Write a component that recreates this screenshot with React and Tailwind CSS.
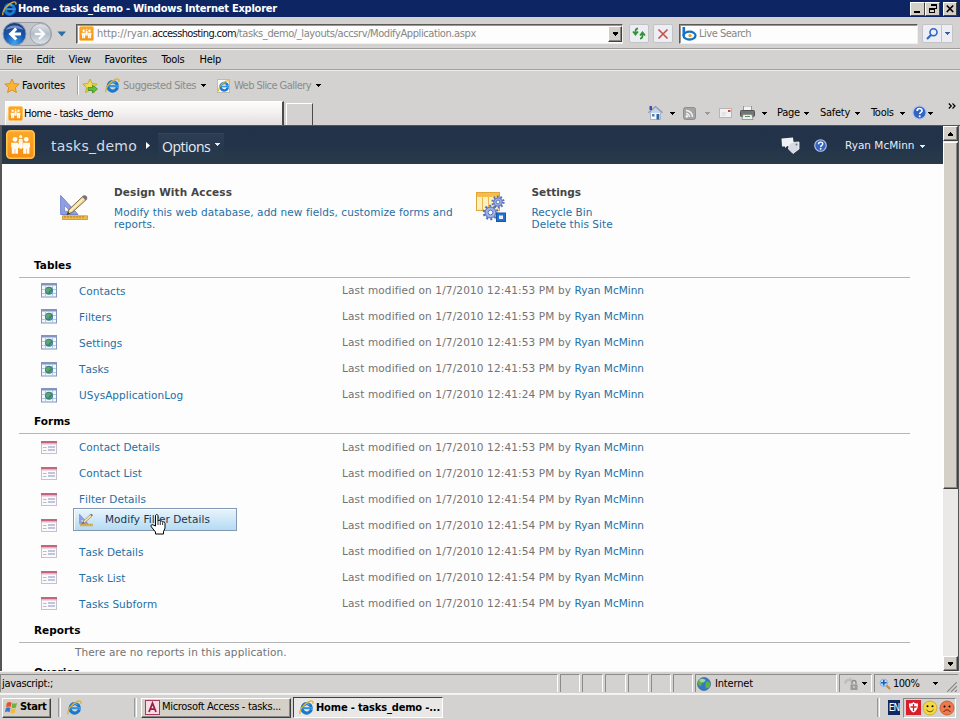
const SYS = "[font-family:'DejaVu_Sans_Condensed','DejaVu_Sans',sans-serif] text-[11px]";
const WEB = "[font-family:'DejaVu_Sans',sans-serif] text-[10.5px]";

const tables = [
  ["Contacts", "12:41:53"],
  ["Filters", "12:41:53"],
  ["Settings", "12:41:53"],
  ["Tasks", "12:41:53"],
  ["USysApplicationLog", "12:41:24"],
];

const forms = [
  ["Contact Details", "12:41:53"],
  ["Contact List", "12:41:53"],
  ["Filter Details", "12:41:54"],
  ["Settings", "12:41:54"],
  ["Task Details", "12:41:54"],
  ["Task List", "12:41:54"],
  ["Tasks Subform", "12:41:54"],
];

function Caret({ className = "" }) {
  return (
    <svg viewBox="0 0 5 3" className={"h-[3px] w-[5px] shrink-0 " + className} shapeRendering="crispEdges">
      <path d="M0 0h5L2.5 3z" fill="currentColor" />
    </svg>
  );
}

function IeLogo({ className }) {
  return (
    <svg viewBox="0 0 16 16" className={"shrink-0 " + className}>
      <path d="M13.2 9.800A5 5 0 1 1 13.1 7.600" fill="none" stroke="#1c78cc" strokeWidth="3.400" />
      <path d="M4 8.700h10.800" stroke="#2f93de" strokeWidth="2.200" />
      <path d="M4.400 6.400A4.600 4.600 0 0 1 11 4.700" fill="none" stroke="#7cc8f4" strokeWidth="1" />
      <path d="M1.200 15.200C-.6 12 4.600 4 11 1.400c3.200-1.200 4.600 0 3.600 2.600" fill="none" stroke="#e2b024" strokeWidth="1.400" />
    </svg>
  );
}

function SiteLogo({ className }) {
  return (
    <svg viewBox="0 0 28 28" className={"shrink-0 " + className}>
      <defs>
        <linearGradient id="site" x1="0" y1="0" x2="0" y2="1">
          <stop offset="0" stopColor="#fba92a" />
          <stop offset="1" stopColor="#f68f14" />
        </linearGradient>
      </defs>
      <rect x=".75" y=".75" width="26.5" height="26.5" rx="3.500" fill="url(#site)" stroke="#ffc653" strokeWidth="1.500" />
      <g fill="#fffaf0">
        <circle cx="8.700" cy="9" r="2.300" />
        <circle cx="19.600" cy="9" r="2.300" />
        <circle cx="14.200" cy="6.400" r="1.500" />
        <path d="M5 12.400h6.200l1.500 1.800v3.200h-1.100V23H8.900v-4.600h-.5V23H5.600v-6H5zM17 12.400h6.200V17h-.6v6h-2.700v-4.600h-.5V23h-2.800v-5.600h-1v-3.200z" />
        <path d="M12.600 8.800h3.200l.4 2.800-.8 6.400h-2.400l-.8-6.400z" />
      </g>
    </svg>
  );
}

function Star({ className, arrow }) {
  return (
    <svg viewBox="0 0 16 16" className={"shrink-0 " + className}>
      <path d="M8 1l2.100 4.600 5 .5-3.800 3.400 1.100 5L8 12l-4.400 2.500 1.100-5L.9 6.100l5-.5z" fill={arrow ? "#f6dc4c" : "#fbb433"} stroke={arrow ? "#b9a832" : "#d98a1f"} strokeWidth=".9" />
      {arrow && <path d="M6 9.500h4.500V7l5 4-5 4v-2.600H6z" fill="#5fc044" stroke="#2f8a22" strokeWidth=".7" />}
    </svg>
  );
}

function DesignIcon({ className }) {
  return (
    <svg viewBox="0 0 28 27" className={"shrink-0 " + className}>
      <path d="M.7 1.500L18 20.500H.7z" fill="#8f9fe0" stroke="#7183cf" />
      <path d="M4.600 11.400l5.400 5.800H4.600z" fill="#fff" stroke="#6a7ccc" strokeWidth=".7" />
      <path d="M2.500 21.800h25v3.700h-25z" fill="#eebb4a" stroke="#c98f27" strokeWidth=".8" />
      <path d="M5 22v1.800M8 22v1.800M11 22v1.800M14 22v1.800M17 22v1.800M20 22v1.800M23 22v1.800" stroke="#8f6414" strokeWidth=".7" />
      <path d="M7 20.500l2-5L23.500 1.800l3.300 3.300L12 18.500z" fill="#f0d79a" stroke="#705c38" strokeWidth=".9" />
      <path d="M10 17.300L24.400 3.700" stroke="#fff3cc" strokeWidth="1.200" />
      <path d="M22.300 3l1.600-1.500c1.500-1 4.200 1.500 3.200 3.100l-1.600 1.600z" fill="#7d7371" />
      <path d="M6.700 21l1.400-3.300 2 2z" fill="#4a3d2c" />
    </svg>
  );
}

function Gear({ cx, cy, r }) {
  const c = 2 * Math.PI * r;
  return (
    <g>
      <circle cx={cx} cy={cy} r={r} fill="none" stroke="#5a74ba" strokeWidth="3.200" strokeDasharray={`${c / 20} ${c / 20}`} />
      <circle cx={cx} cy={cy} r={r - 0.8} fill="#a0b3e4" stroke="#6880c4" strokeWidth="1.200" />
      <circle cx={cx} cy={cy} r={r / 2.6} fill="#f2f5ff" stroke="#5a74ba" strokeWidth="1" />
    </g>
  );
}

function SettingsIcon() {
  return (
    <svg viewBox="0 0 30 31" className="h-[31px] w-[30px] shrink-0">
      <rect x=".5" y="1.500" width="23" height="18" fill="#fff0bd" stroke="#e0a63a" />
      <rect x="1" y="2" width="22" height="4" fill="#f7bd4a" />
      <path d="M6.500 6v13M12.500 6v13M18.500 6v13" stroke="#eab64f" strokeWidth="1" />
      <Gear cx={22} cy={11} r={5} />
      <Gear cx={14.5} cy={21.5} r={6.2} />
      <rect x="20.500" y="22" width="9" height="8.500" fill="#2470cf" stroke="#1558ab" />
      <rect x="23" y="24.500" width="4" height="3.500" fill="#e9f2ff" />
    </svg>
  );
}

function TableIcon() {
  return (
    <svg viewBox="0 0 16 15" className="h-[15px] w-4 shrink-0">
      <rect x=".5" y=".5" width="15" height="13.500" fill="#f2f7fd" stroke="#8196b8" />
      <path d="M0 0h16v2.500H0z" fill="#8296bd" />
      <path d="M1 6.500h14M1 10.500h14M4.500 3v11M11.500 3v11" stroke="#b3c7e0" />
      <circle cx="8" cy="7.800" r="4" fill="#3a7f90" />
      <path d="M5.500 5.500c2-1.500 4-.8 4.500.5s-2 1.200-2 2.500-1.500 1.600-2.500.5-.8-2.500 0-3.500z" fill="#5fa862" />
      <path d="M10 8l1.500.3-1 2-1.500.5z" fill="#55a85b" />
    </svg>
  );
}

function FormIcon() {
  return (
    <svg viewBox="0 0 16 13" className="h-[13px] w-4 shrink-0">
      <rect x=".5" y=".5" width="15" height="12" fill="#fbf9fc" stroke="#c9c0cf" />
      <path d="M0 0h16v2.500H0z" fill="#c0667e" />
      <path d="M0 3h16" stroke="#e3b9c4" strokeWidth="1" />
      <path d="M2 6.500h3.500M2 9.500h3.500" stroke="#b9b9c8" />
      <path d="M7 5h7v2H7zM7 8h7v2H7z" fill="#bfc6dc" />
    </svg>
  );
}

function HelpIcon({ className }) {
  return (
    <svg viewBox="0 0 14 14" className={"shrink-0 " + className}>
      <circle cx="7" cy="7" r="6.200" fill="#3464c0" stroke="#b4c8f0" strokeWidth="1.200" />
      <path d="M4.800 5.600c0-3 4.600-3 4.600-.3 0 1.600-2.200 1.500-2.200 3.200" fill="none" stroke="#fff" strokeWidth="1.500" />
      <circle cx="7.200" cy="10.500" r=".95" fill="#fff" />
    </svg>
  );
}

const raised = "border border-t-white border-l-white border-r-[#404040] border-b-[#404040] bg-[#d4d0c8]";

function TitleBar() {
  return (
    <div className={SYS + " flex h-[17px] items-center bg-[#0d2563] pr-[3px] pl-[2px] font-bold text-white"}>
      <IeLogo className="h-[15px] w-[15px]" />
      <span className="ml-px pt-[2px] tracking-[-0.23px] whitespace-pre">Home - tasks_demo - Windows Internet Explorer</span>
      <div className="ml-auto flex">
        <div className={raised + " flex h-3.5 w-[15px]"}>
          <svg viewBox="0 0 13 12" className="h-3 w-[13px]" shapeRendering="crispEdges"><path d="M3 8h6v2H3z" /></svg>
        </div>
        <div className={raised + " flex h-3.5 w-[15px]"}>
          <svg viewBox="0 0 13 12" className="h-3 w-[13px]" shapeRendering="crispEdges" fill="none" stroke="#000"><path d="M5.500 3V1.500h5v4H9M5 2h6M3.500 5.500h5v4h-5zM3 6h6" /></svg>
        </div>
        <div className={raised + " ml-[3px] flex h-3.5 w-[14px]"}>
          <svg viewBox="0 0 12 12" className="h-3 w-3" stroke="#000" strokeWidth="1.700"><path d="M2.800 2.500l6.400 6.500M9.200 2.500L2.800 9" /></svg>
        </div>
      </div>
    </div>
  );
}

function AddressBar() {
  const field = "flex items-center border border-t-[#5c5a56] border-l-[#5c5a56] border-r-[#f0efec] border-b-[#f0efec] bg-[#fdfdfd] shadow-[inset_1px_1px_0_#9a9893]";
  const button = "flex h-[19px] items-center justify-center rounded-[2px] border border-[#c2c3c9] bg-[#eceef3]";
  return (
    <div className={SYS + " flex h-[31px] items-center pt-[2px] text-[#868686]"}>
      <svg viewBox="0 0 68 26" className="ml-[2px] h-[26px] w-[68px] shrink-0">
        <defs>
          <radialGradient id="back" cx=".5" cy=".9" r=".9">
            <stop offset="0" stopColor="#3fa7ee" />
            <stop offset=".5" stopColor="#1b58b0" />
            <stop offset="1" stopColor="#1d3c83" />
          </radialGradient>
          <linearGradient id="fwd" x1="0" y1="0" x2="0" y2="1">
            <stop offset="0" stopColor="#e2e4e9" />
            <stop offset=".5" stopColor="#b4bcc8" />
            <stop offset="1" stopColor="#dfe6ee" />
          </linearGradient>
        </defs>
        <path d="M12 1.500h26a11 11 0 0 1 0 23H12z" fill="#c3c5c9" stroke="#9a9da3" />
        <circle cx="12.500" cy="13" r="11.500" fill="url(#back)" stroke="#8d9db8" strokeWidth="1" />
        <path d="M3.500 9a10 8 0 0 1 18 0c-5-2.500-13-2.500-18 0z" fill="#fff" opacity=".4" />
        <path d="M19 11.500v3h-6.500l2.800 3-2.100 2L6.500 13l6.700-6.500 2.100 2-2.800 3z" fill="#fff" />
        <circle cx="38.500" cy="13" r="10.500" fill="url(#fwd)" stroke="#9ea5b0" />
        <path d="M32.500 11.500v3h6l-2.700 3 2 1.800 6.200-6.300-6.200-6.300-2 1.800 2.700 3z" fill="#f8fafc" stroke="#b2bac6" strokeWidth=".5" />
        <path d="M55.500 10.500h8.500l-4.250 5z" fill="#2a6fa8" />
      </svg>
      <div className={field + " ml-[6px] h-5 w-[547px] pl-[2px]"}>
        <SiteLogo className="h-[15px] w-[15px]" />
        <div className="ml-[3px] flex pt-[2px] whitespace-pre">
          <span className="tracking-[-0.06px]">http://ryan.</span>
          <span className="tracking-[-0.61px] text-[#111]">accesshosting.com</span>
          <span className="tracking-[-0.4px]">/tasks_demo/_layouts/accsrv/ModifyApplication.aspx</span>
        </div>
        <div className={raised + " ml-auto flex h-4 w-3.5 items-center justify-center text-black shadow-[inset_-1px_-1px_0_#888]"}>
          <Caret className="h-[4px] w-[7px]" />
        </div>
      </div>
      <div className={button + " ml-[6px] w-5"}>
        <svg viewBox="0 0 14 13" className="h-[13px] w-3.5" fill="none" stroke="#2f9538" strokeWidth="1.800">
          <path d="M6 1.500C3.500 1.500 3.500 3 3.500 6M1 4.500l2.500 3 2.500-3" />
          <path d="M8 11.500c2.500 0 2.500-1.500 2.500-4.500M8 8.500l2.500-3 2.500 3" />
        </svg>
      </div>
      <div className={button + " ml-[4px] w-5"}>
        <svg viewBox="0 0 12 12" className="h-3 w-3" stroke="#c9524c" strokeWidth="1.700"><path d="M1.500 1.500l9 9M10.500 1.500l-9 9" /></svg>
      </div>
      <div className={field + " ml-[6px] h-5 w-[239px] pl-[2px]"}>
        <svg viewBox="0 0 15 14" className="h-3.5 w-[15px]" fill="none">
          <path d="M1.800 0v9" stroke="#1673c4" strokeWidth="2.600" />
          <ellipse cx="7.500" cy="8.600" rx="6" ry="3.900" stroke="#1673c4" strokeWidth="2.300" />
          <circle cx="8" cy="8.600" r="1.700" fill="#f3a21c" />
        </svg>
        <span className="ml-[2px] pt-[2px] tracking-[-0.48px]">Live Search</span>
      </div>
      <div className={button + " ml-[4px] w-5 rounded-r-none"}>
        <svg viewBox="0 0 12 12" className="h-3 w-3" fill="none" stroke="#2f66c4"><circle cx="7.500" cy="4.300" r="3.500" strokeWidth="1.600" /><path d="M5 7L1 11" strokeWidth="2.200" /></svg>
      </div>
      <div className={button + " w-[11px] rounded-l-none border-l-0 text-[#2a62ac]"}><Caret /></div>
    </div>
  );
}

function MenuBar() {
  const menu = [["File", "w-[30px]"], ["Edit", "w-8"], ["View", "w-9"], ["Favorites", "w-[57px]"], ["Tools", "w-[38px]"], ["Help", "w-10"]];
  return (
    <div className={SYS + " flex h-[22px] items-center border-t border-b border-t-[#9c9a96] border-b-[#a5a3a0] pt-[3px] pl-[6.500px] tracking-[-0.25px] shadow-[inset_0_1px_0_#f4f4f2]"}>
      {menu.map(([name, w]) => <span key={name} className={w}>{name}</span>)}
    </div>
  );
}

function FavoritesBar() {
  return (
    <div className={SYS + " flex h-[31px] items-center pl-1 text-[#8b8b8b] shadow-[inset_0_1px_0_#ececea]"}>
      <Star className="h-4 w-4" />
      <span className="ml-[2px] w-[43px] pt-px tracking-[-0.18px] text-black">Favorites</span>
      <div className="ml-[12px] h-[19px] w-[2px] border-l border-[#a5a39f] bg-white" />
      <Star className="ml-[3px] h-4 w-4" arrow />
      <IeLogo className="ml-[7px] h-[15px] w-[15px]" />
      <span className="ml-[3px] w-[73px] pt-[2px] tracking-[-0.46px] whitespace-nowrap">Suggested Sites</span>
      <Caret className="ml-[5px] text-black" />
      <div className="ml-[11px] flex h-[14px] w-[13px] items-center justify-center border border-[#bbb] bg-[#fafafa]"><IeLogo className="h-3 w-3" /></div>
      <span className="ml-[4px] w-[77px] pt-[2px] tracking-[-0.55px] whitespace-nowrap">Web Slice Gallery</span>
      <Caret className="ml-[5px] text-black" />
    </div>
  );
}

function TabRow() {
  return (
    <div className={SYS + " flex h-6 items-center pl-[5px] text-black"}>
      <div className="flex h-6 w-[279px] items-center border-t border-r-2 border-l border-t-white border-r-[#4a4a4a] border-l-white bg-linear-to-b from-[#fdfcfc] via-[#f4efef] to-[#e3dddd] pl-0.5">
        <SiteLogo className="h-[15px] w-[15px]" />
        <span className="ml-[1px] pt-[2px] tracking-[-0.53px]">Home - tasks_demo</span>
      </div>
      <div className="ml-[2px] h-[22px] w-[27px] self-end border-t border-r border-l border-t-white border-r-[#4a4a4a] border-l-white" />
      <div className="ml-[335px] flex h-[22px] flex-1 items-center">
        <svg viewBox="0 0 15 15" className="mb-px h-[15px] w-[15px]">
          <path d="M2.500 7h10v7.500h-10z" fill="#f4f7fb" stroke="#9aa7bb" strokeWidth=".8" />
          <path d="M.5 7.800L7.500 1.500l7 6.300" fill="#c5d2e6" stroke="#8a98b0" strokeWidth="1.300" />
          <path d="M1.500 1h2.500v4H1.500z" fill="#4a46b8" />
          <path d="M8.500 9h2.800v5.500H8.500z" fill="#2a62a8" />
          <path d="M4 9h2.500v2.500H4z" fill="#4482c4" />
        </svg>
        <Caret className="ml-[7px]" />
        <svg viewBox="0 0 13 13" className="ml-[8px] h-[13px] w-[13px]" fill="none" stroke="#f2f2f2" strokeWidth="1.500">
          <rect x=".5" y=".5" width="12" height="12" rx="2" fill="#a4a4a4" stroke="#8e8e8e" strokeWidth="1" />
          <path d="M3 6.500A3.500 3.500 0 0 1 6.500 10M3 3.500A6.500 6.500 0 0 1 9.500 10" />
          <circle cx="3.800" cy="9.300" r=".6" />
        </svg>
        <Caret className="ml-[9px] text-[#999]" />
        <svg viewBox="0 0 13 10" className="mb-px ml-[9px] h-2.5 w-[13px]">
          <rect x=".5" y=".5" width="12" height="9" fill="#f2f2f2" stroke="#b5b5b5" />
          <path d="M9 2h2.500v2H9z" fill="#d0483c" /><path d="M2.500 5h5M2.500 7h4" stroke="#d5d5d5" />
        </svg>
        <svg viewBox="0 0 15 14" className="mb-px ml-[8px] h-3.5 w-[15px]">
          <path d="M3.500 0h8v5h-8z" fill="#f4f4f4" stroke="#888" strokeWidth=".8" />
          <rect x=".5" y="4.500" width="14" height="6" rx="1" fill="#70757a" stroke="#4d5156" />
          <path d="M3 8.500h9l1 5H2z" fill="#eee" stroke="#888" strokeWidth=".8" /><path d="M5 10.500h5" stroke="#4c9a58" />
        </svg>
        <Caret className="ml-[7px]" />
        <span className="ml-2.5 w-[24px] tracking-[-0.3px]">Page</span>
        <Caret className="ml-[3px]" />
        <span className="ml-[11px] w-[30px] tracking-[-0.28px]">Safety</span>
        <Caret className="ml-[5px]" />
        <span className="ml-[11px] w-[24px] tracking-[-0.3px]">Tools</span>
        <Caret className="ml-[5px]" />
        <HelpIcon className="mb-px ml-[7px] h-[15px] w-[15px]" />
        <Caret className="ml-[1px]" />
        <svg viewBox="0 0 8 6" className="mr-[4px] mb-3.5 ml-auto h-[6px] w-2" fill="none" stroke="#000" strokeWidth="1.200"><path d="M.8.5L3.300 3 .8 5.500M4.500.5L7 3 4.500 5.500" /></svg>
      </div>
    </div>
  );
}

function SiteHeader() {
  return (
    <div className={WEB + " flex h-[38px] items-center bg-linear-to-b from-[#233248] via-[#22334a] to-[#293b48] pl-1 text-[#e8edf3]"}>
      <SiteLogo className="mb-px h-[29px] w-[29px]" />
      <span className="ml-[16px] w-[87px] pt-[2px] text-[14px] tracking-[0.25px] text-[#d3dbe5]">tasks_demo</span>
      <svg viewBox="0 0 4 7" className="ml-[8px] h-[7px] w-1"><path d="M0 0l4 3.500L0 7z" fill="#fff" /></svg>
      <div className="mb-[5px] ml-[8px] flex h-[26px] w-[66px] items-center self-end border-t border-[#34465c] bg-linear-to-b from-[#2d3e54] to-transparent pl-1">
        <span className="w-[49px] [font-family:'Open_Sans',sans-serif] text-[14px] tracking-[-0.5px]">Options</span>
        <Caret className="mb-1 ml-1" />
      </div>
      <svg viewBox="0 0 19 17" className="ml-auto h-[17px] w-[19px]">
        <path d="M.5 1.500L12 .5l1 8.500H6.500L4 11V9.500H1z" fill="#eef1f6" />
        <path d="M8 7.500l2.500-2 7.500-.5v7l-6 4.500L7.500 12z" fill="#d5dae4" stroke="#f6f8fb" strokeWidth=".8" />
        <circle cx="15.500" cy="7.500" r="1" fill="#6a7890" />
      </svg>
      <HelpIcon className="ml-[14px] h-[13px] w-[13px]" />
      <span className="ml-[18px] w-[70px] pt-px">Ryan McMinn</span>
      <Caret className="mt-[2px] mr-[18px] ml-[5px]" />
    </div>
  );
}

function Section({ title }) {
  return (
    <div className="mr-[33px] ml-[17px] flex h-[26px] items-center border-b border-[#b5b5b5] pt-[3px] pl-[15px] font-bold text-black">
      <span>{title}</span>
    </div>
  );
}

function ContextMenu() {
  return (
    <div className="absolute top-[16px] -left-[6px] z-10 flex h-[23px] w-[164px] items-center border border-[#8497b3] bg-linear-to-b from-[#e8f4fc] to-[#b4dbf3] pl-[5px] text-[#24344c] shadow-[inset_1px_1px_0_#f8fcff]">
      <DesignIcon className="mt-px h-3.5 w-[14px]" />
      <span className="ml-[12px] pt-px tracking-[0.05px] whitespace-nowrap">Modify Filter Details</span>
      <svg viewBox="0 0 16 21" className="absolute top-[5px] left-[76px] h-[21px] w-4">
        <path d="M5.500 12V2c0-2 2.500-2 2.500 0v5c.5-1 2.300-.8 2.300.5.5-1 2.300-.6 2.300.6.8-.6 2.400-.2 2.400 1.200v4.500c0 1.500-1.500 3-1.500 4.200v2H5.500v-2L1.300 12.800c-1-1.600.5-2.800 1.800-1.800z" fill="#fff" stroke="#000" />
        <path d="M8 7v4M10.300 8v3M12.600 8.500V11" stroke="#000" strokeWidth=".8" />
      </svg>
    </div>
  );
}

function Row({ name, time, icon, children }) {
  return (
    <div className="flex h-[26.1px] items-center">
      <div className="ml-[38.500px] flex w-[38.500px]">{icon}</div>
      <div className="relative w-[263px] text-[#256fa6]">
        <span className="relative top-[0.8px] tracking-[0.03px] [font-kerning:none]">{name}</span>
        {children}
      </div>
      <span className="w-[232.500px] pt-[0.4px] tracking-[0.14px] whitespace-pre">Last modified on 1/7/2010 {time} PM by </span>
      <span className="pt-[0.4px] text-[#256fa6]">Ryan McMinn</span>
    </div>
  );
}

function Page() {
  return (
    <div className={WEB + " flex h-[508px] flex-col overflow-hidden bg-[#fdfdfd] text-[#737373]"}>
      <div className="flex h-[92px] shrink-0 pt-[22px]">
        <DesignIcon className="mt-[8px] ml-[58px] h-[27px] w-[28px]" />
        <div className="ml-[26px] w-[360px] leading-3">
          <div className="font-bold tracking-[0.12px] text-[#444]">Design With Access</div>
          <div className="mt-2 tracking-[0.08px] text-[#256fa6]">Modify this web database, add new fields, customize forms and<br />reports.</div>
        </div>
        <div className="mt-[5px] ml-[2px]"><SettingsIcon /></div>
        <div className="ml-[25.500px] leading-3">
          <div className="font-bold text-[#444]">Settings</div>
          <div className="mt-2 tracking-[0.04px] text-[#256fa6]">Recycle Bin<br />Delete this Site</div>
        </div>
      </div>
      <div className="h-[457px] shrink-0">
        <div className="-mt-[4.300px]"><Section title="Tables" /></div>
        {tables.map(([n, t]) => <Row key={n} name={n} time={t} icon={<TableIcon />} />)}
        <Section title="Forms" />
        {forms.map(([n, t]) => (
          <Row key={n} name={n} time={t} icon={<FormIcon />}>{n === "Filter Details" && <ContextMenu />}</Row>
        ))}
        <Section title="Reports" />
        <div className="h-[16px] pt-[2px] pl-[73px] tracking-[0.1px]">There are no reports in this application.</div>
        <Section title="Queries" />
      </div>
    </div>
  );
}

function ScrollBar() {
  const button = raised + " flex h-[15px] w-[15px] items-center justify-center text-black shadow-[inset_-1px_-1px_0_#888]";
  return (
    <div className="flex w-[15px] flex-col bg-[#eae9e7]">
      <div className={button}><Caret className="h-[4px] w-[7px] rotate-180" /></div>
      <div className={raised + " mt-px h-[347px] shadow-[inset_-1px_-1px_0_#888]"} />
      <div className={button + " mt-auto"}><Caret className="h-[4px] w-[7px]" /></div>
    </div>
  );
}

function StatusBar() {
  const pane = "h-[18px] border-t border-l border-[#8d8b88] border-r border-r-white mr-[2px]";
  return (
    <div className={SYS + " flex h-[22px] items-center border-t border-[#f4f4f2] pt-px text-black"}>
      <div className={pane + " flex w-[558px] items-center pl-px"}><span className="pt-[2px] tracking-[-0.33px]">javascript:;</span></div>
      <div className={pane + " w-[20px]"} />
      <div className={pane + " w-[21px]"} />
      <div className={pane + " w-[21px]"} />
      <div className={pane + " w-[21px]"} />
      <div className={pane + " w-[20px]"} />
      <div className={pane + " w-[20px]"} />
      <div className={pane + " flex w-[142px] items-center pl-px"}>
        <svg viewBox="0 0 14 14" className="h-3.5 w-3.5">
          <circle cx="7" cy="7" r="6.500" fill="#3579c4" stroke="#2a5c94" strokeWidth=".6" />
          <path d="M3 2c3-1.500 5 0 4.500 2S4 6 4.500 8 2 9 1 7s0-4 2-5zM9 5c2-1 4 0 4.300 2s-1.300 4-2.800 4.500S8 9 8.500 8 8 5.500 9 5z" fill="#5fb14c" />
          <ellipse cx="5.500" cy="3.500" rx="3" ry="1.800" fill="#fff" opacity=".45" />
        </svg>
        <span className="ml-[4px] pt-[2px] tracking-[-0.16px]">Internet</span>
      </div>
      <div className={pane + " flex w-[33px] items-center pl-[3px]"}>
        <svg viewBox="0 0 15 13" className="h-[13px] w-[15px]">
          <path d="M1 6a5 5 0 0 1 6-4.500V0l3 3-3 2.500V4c-2 0-3.500 1-4 3z" fill="#bdbdbd" />
          <path d="M9 7.500V5.500a2 2 0 0 1 4 0v2" fill="none" stroke="#8b8b8b" strokeWidth="1.300" />
          <path d="M7.500 7.500h7V13h-7z" fill="#9a9a9a" /><path d="M11 9v2" stroke="#eee" />
        </svg>
        <Caret className="ml-1" />
      </div>
      <div className={pane + " mr-0 flex flex-1 items-center border-r-0 pl-[4px]"}>
        <svg viewBox="0 0 12 12" className="h-3 w-3" fill="none">
          <path d="M7.500 7.500L11 11" stroke="#c98b3c" strokeWidth="2.200" />
          <circle cx="4.800" cy="4.800" r="3.700" fill="#c4e0fa" stroke="#7fb0e4" strokeWidth="1" /><path d="M4.800 2v5.600M2 4.800h5.600" stroke="#1f5fae" strokeWidth="1.600" />
        </svg>
        <span className="ml-[2px] pt-[2px] tracking-[-0.5px]">100%</span>
        <Caret className="ml-[14px]" />
        <svg viewBox="0 0 10 10" className="mr-px ml-auto h-2.5 w-2.5 self-end" stroke="#8a8885" strokeWidth="1.200"><path d="M0 10L10 0M4 10l6-6M8 10l2-2" /></svg>
      </div>
    </div>
  );
}

function TaskBar() {
  const divider = "h-[19px] w-[3px] border-l border-r border-l-[#999] border-r-white";
  return (
    <div className={SYS + " flex h-[27px] items-center border-t-2 border-[#f2f2f0] pl-[2px] text-black"}>
      <div className={raised + " flex h-[20px] w-[49px] items-center pl-0.5 font-bold shadow-[inset_-1px_-1px_0_#888]"}>
        <svg viewBox="0 0 14 13" className="h-[13px] w-3.5 shrink-0">
          <path d="M2 1.800c1.500-1 3-1 4.500-.2L5.700 6C4.300 5.200 2.800 5.200 1 6z" fill="#e8502c" />
          <path d="M7.300 2c1.500.8 3 .8 4.700 0l-1 4.400c-1.500.8-3 .8-4.500 0z" fill="#6cb33f" />
          <path d="M.9 6.900c1.500-.9 3-.9 4.600 0l-1 4.300c-1.500-.8-3-.8-4.500 0z" fill="#3b74d2" />
          <path d="M6.300 7.300c1.500.8 3 .8 4.500 0l-1 4.300c-1.500.8-3 .8-4.500 0z" fill="#f4bd27" />
        </svg>
        <span className="ml-px tracking-[-0.35px]">Start</span>
      </div>
      <div className={divider + " ml-[7px]"} />
      <IeLogo className="ml-[6px] h-[15px] w-[15px]" />
      <div className={divider + " ml-[52px]"} />
      <div className={raised + " ml-[4px] flex h-[20px] w-[150px] items-center pl-[3px] shadow-[inset_-1px_-1px_0_#888]"}>
        <svg viewBox="0 0 15 15" className="h-[15px] w-[15px]">
          <rect x=".5" y=".5" width="14" height="14" fill="#f6dce4" stroke="#a83a5a" />
          <path d="M4 12L7.500 3.200 11 12M5.300 9.200h4.400" fill="none" stroke="#9a1f47" strokeWidth="1.800" />
        </svg>
        <span className="ml-[2px] tracking-[-0.31px] whitespace-nowrap">Microsoft Access - tasks...</span>
      </div>
      <div className="ml-[2px] flex h-[21px] w-[150px] items-center border border-t-[#404040] border-r-white border-b-white border-l-[#404040] bg-[#e9e8e6] pl-[5px] font-bold">
        <IeLogo className="h-[15px] w-[15px]" />
        <span className="ml-[2px] pt-px tracking-[-0.16px] whitespace-nowrap">Home - tasks_demo -...</span>
      </div>
      <div className={divider + " ml-auto"} />
      <div className="ml-2 flex h-[15px] w-[12px] items-center justify-center overflow-hidden bg-[#12295f] text-[10px] tracking-[-1px] text-white">EN</div>
      <div className="mr-1 ml-[3px] flex h-[20px] w-[53px] items-center gap-px border border-t-[#888] border-r-white border-b-white border-l-[#888] pl-[2px]">
        <svg viewBox="0 0 15 15" className="h-[15px] w-[15px]">
          <path d="M0 0h15v15H0z" fill="#d61f2c" />
          <path d="M3 3.500c2 0 3.500-.5 4.500-1.500 1 1 2.500 1.500 4.500 1.500 0 5-1.500 7.500-4.500 9C4.500 11 3 8.500 3 3.500z" fill="#fff" /><path d="M7.500 4v7M4.500 7h6" stroke="#d61f2c" strokeWidth="1.300" />
        </svg>
        <svg viewBox="0 0 16 16" className="h-4 w-4">
          <circle cx="8" cy="8" r="7" fill="#f7d744" stroke="#c9a52c" strokeWidth=".8" /><circle cx="5.500" cy="6.200" r="1" /><circle cx="10.500" cy="6.200" r="1" />
          <path d="M4.300 9.500c2 3 5.400 3 7.400 0" fill="none" stroke="#6b5310" />
        </svg>
        <svg viewBox="0 0 16 16" className="h-4 w-4">
          <circle cx="8" cy="8" r="7" fill="#ee7a4c" stroke="#c2512c" strokeWidth=".8" /><circle cx="5.500" cy="6.500" r="1" /><circle cx="10.500" cy="6.500" r="1" />
          <path d="M4.500 12c2-2.800 5-2.800 7 0" fill="none" stroke="#6b2410" />
        </svg>
      </div>
    </div>
  );
}

export default function App() {
  return (
    <div className="flex h-[720px] w-[960px] flex-col overflow-hidden bg-[#d3d2d0]">
      <TitleBar />
      <AddressBar />
      <MenuBar />
      <FavoritesBar />
      <TabRow />
      <div className="flex h-[546px] border-t border-l-2 border-[#555] pr-[1px]">
        <div className="w-[941px]">
          <SiteHeader />
          <Page />
        </div>
        <ScrollBar />
        <div className="w-px bg-[#555]" />
      </div>
      <StatusBar />
      <TaskBar />
    </div>
  );
}
